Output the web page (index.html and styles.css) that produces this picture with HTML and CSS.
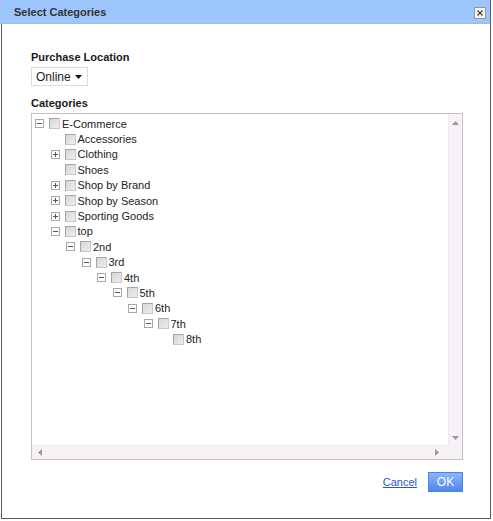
FILE: index.html
```html
<!DOCTYPE html>
<html lang="en">
<head>
    <meta charset="UTF-8">
    <title>Select Categories</title>
    <link rel="stylesheet" href="styles.css">
</head>
<body>

    <div class="dialog">
        <div class="dialog-title">
            <span>Select Categories</span>
            <span class="close-btn">
                <svg width="12" height="12" viewBox="0 0 12 12">
                    <rect x="0.5" y="0.5" width="11" height="11" fill="#f2f2f2" stroke="#9a9a9a"/>
                    <path d="M3.5 3.5 L8.5 8.5 M8.5 3.5 L3.5 8.5" stroke="#444" stroke-width="1.2"/>
                </svg>
            </span>
        </div>

        <div class="dialog-body">
            <label class="field-label" for="location">Purchase Location</label>
            <div class="select-box" id="location">
                <span>Online</span>
                <svg width="7" height="4" viewBox="0 0 7 4"><path d="M0 0 H7 L3.5 4 Z" fill="#111"/></svg>
            </div>

            <label class="field-label cat-label">Categories</label>
            <div class="tree-box">
                <div class="tree-view">
                    <ul class="tree">
                        <li>
                            <div class="node"><span class="toggle minus"></span><span class="check"></span>E-Commerce</div>
                            <ul>
                                <li><div class="node"><span class="toggle none"></span><span class="check"></span>Accessories</div></li>
                                <li><div class="node"><span class="toggle plus"></span><span class="check"></span>Clothing</div></li>
                                <li><div class="node"><span class="toggle none"></span><span class="check"></span>Shoes</div></li>
                                <li><div class="node"><span class="toggle plus"></span><span class="check"></span>Shop by Brand</div></li>
                                <li><div class="node"><span class="toggle plus"></span><span class="check"></span>Shop by Season</div></li>
                                <li><div class="node"><span class="toggle plus"></span><span class="check"></span>Sporting Goods</div></li>
                                <li>
                                    <div class="node"><span class="toggle minus"></span><span class="check"></span>top</div>
                                    <ul><li>
                                        <div class="node"><span class="toggle minus"></span><span class="check"></span>2nd</div>
                                        <ul><li>
                                            <div class="node"><span class="toggle minus"></span><span class="check"></span>3rd</div>
                                            <ul><li>
                                                <div class="node"><span class="toggle minus"></span><span class="check"></span>4th</div>
                                                <ul><li>
                                                    <div class="node"><span class="toggle minus"></span><span class="check"></span>5th</div>
                                                    <ul><li>
                                                        <div class="node"><span class="toggle minus"></span><span class="check"></span>6th</div>
                                                        <ul><li>
                                                            <div class="node"><span class="toggle minus"></span><span class="check"></span>7th</div>
                                                            <ul><li>
                                                                <div class="node"><span class="toggle none"></span><span class="check"></span>8th</div>
                                                            </li></ul>
                                                        </li></ul>
                                                    </li></ul>
                                                </li></ul>
                                            </li></ul>
                                        </li></ul>
                                    </li></ul>
                                </li>
                            </ul>
                        </li>
                    </ul>
                </div>
                <div class="vscroll">
                    <svg width="7" height="4" viewBox="0 0 7 4"><path d="M0 4 H7 L3.5 0 Z" fill="#9a9a9a"/></svg>
                    <svg width="7" height="4" viewBox="0 0 7 4"><path d="M0 0 H7 L3.5 4 Z" fill="#9a9a9a"/></svg>
                </div>
                <div class="hscroll">
                    <svg width="4" height="7" viewBox="0 0 4 7"><path d="M4 0 V7 L0 3.5 Z" fill="#9a9a9a"/></svg>
                    <svg width="4" height="7" viewBox="0 0 4 7"><path d="M0 0 V7 L4 3.5 Z" fill="#9a9a9a"/></svg>
                </div>
                <div class="corner"></div>
            </div>

            <div class="dialog-footer">
                <a href="#" class="cancel-link">Cancel</a>
                <button type="button" class="ok-btn">OK</button>
            </div>
        </div>
    </div>

</body>
</html>
```

FILE: styles.css
```css
body {
    margin: 0;
    background-color: #ffffff;
    font-family: "Liberation Sans", Arial, sans-serif;
    color: #222;
}
.dialog {
    width: 490px;
    height: 519px;
    box-sizing: border-box;
    margin-left: 1px;
    border: 1px solid #5c5c5c;
    border-top: none;
    background-color: #fff;
}
.dialog-title {
    height: 24px;
    box-sizing: border-box;
    margin-left: -2px;
    padding: 0 4px 0 14px;
    display: flex;
    align-items: center;
    justify-content: space-between;
    background-color: #9cc6fc;
    border-bottom: 1px solid #a9bcd6;
    font-size: 11px;
    font-weight: bold;
    color: #333;
}
.close-btn {
    display: flex;
    margin-top: 3px;
}
.dialog-body {
    padding: 26px 27px 0 29px;
}
.field-label {
    display: block;
    height: 14px;
    line-height: 14px;
    font-size: 11px;
    font-weight: bold;
    color: #1a1a1a;
}
.select-box {
    margin-top: 3px;
    width: 57px;
    height: 19px;
    box-sizing: border-box;
    border: 1px solid #dcdcdc;
    display: flex;
    align-items: center;
    justify-content: space-between;
    padding: 0 5px 0 4px;
    font-size: 12px;
    color: #222;
}
.cat-label {
    margin-top: 10px;
}
.tree-box {
    margin-top: 3px;
    height: 347px;
    box-sizing: border-box;
    border: 1px solid #c4c0c8;
    display: grid;
    grid-template-columns: 1fr 14px;
    grid-template-rows: 1fr 14px;
}
.tree-view {
    overflow: hidden;
    padding: 2px 0 0 3px;
}
.tree, .tree ul {
    list-style: none;
    margin: 0;
    padding: 0;
}
.tree ul {
    padding-left: 15.5px;
}
.node {
    display: flex;
    align-items: center;
    height: 15.4px;
    font-size: 11px;
    white-space: nowrap;
    color: #222;
}
.toggle {
    flex: none;
    width: 9px;
    height: 9px;
    margin-right: 5px;
    box-sizing: border-box;
    position: relative;
}
.toggle.minus, .toggle.plus {
    border: 1px solid #a8a8a8;
    background-color: #fff;
}
.toggle.minus::before, .toggle.plus::before {
    content: "";
    position: absolute;
    left: 1px;
    top: 3px;
    width: 5px;
    height: 1px;
    background-color: #555;
}
.toggle.plus::after {
    content: "";
    position: absolute;
    left: 3px;
    top: 1px;
    width: 1px;
    height: 5px;
    background-color: #555;
}
.check {
    flex: none;
    width: 11px;
    height: 11px;
    margin-right: 2px;
    box-sizing: border-box;
    border: 1px solid #a4a4a4;
    border-right-color: #c8c8c8;
    border-bottom-color: #c8c8c8;
    background: linear-gradient(135deg, #d6d6d6, #eeeeee);
}
.vscroll {
    border-left: 1px solid #ece8ec;
    background-color: #f6f2f6;
    display: flex;
    flex-direction: column;
    justify-content: space-between;
    align-items: center;
    padding: 7px 0 5px;
}
.hscroll {
    border-top: 1px solid #ece8ec;
    background-color: #f6f2f6;
    display: flex;
    justify-content: space-between;
    align-items: center;
    padding: 0 9px 0 6px;
}
.corner {
    background-color: #f6f2f6;
}
.dialog-footer {
    margin-top: 12px;
    display: flex;
    justify-content: flex-end;
    align-items: center;
    gap: 11px;
}
.cancel-link {
    font-size: 11px;
    color: #2a55c8;
    text-decoration: underline;
}
.ok-btn {
    width: 35px;
    height: 20px;
    padding: 0;
    border: 1px solid #4a82e6;
    background: linear-gradient(#8cb6fb, #4e86ee);
    color: #fff;
    font-family: "Liberation Sans", Arial, sans-serif;
    font-size: 12px;
}
```
